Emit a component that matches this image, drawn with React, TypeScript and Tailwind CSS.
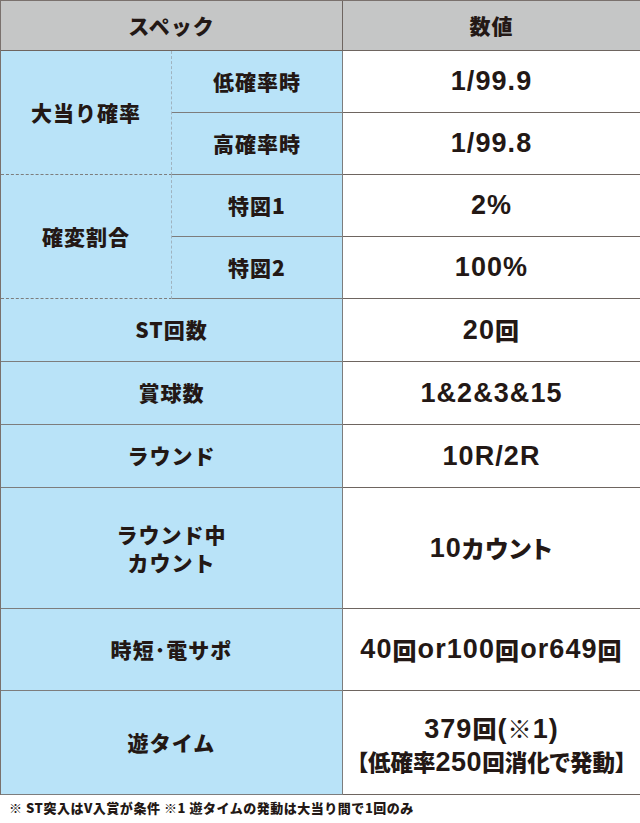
import React from "react";

const jp = { fontFamily: '"Noto Sans CJK JP", "Noto Sans", sans-serif' };
const num = { fontFamily: '"Liberation Sans", "Noto Sans CJK JP", sans-serif' };

const L =
  "bg-[#b9e3f8] border-r border-b border-[#7d7d7d] flex items-center justify-center text-[21px] font-black tracking-[0.05em]";
const V =
  "bg-white border-r border-b border-[#6e6560] flex items-center justify-center text-[27px] font-bold tracking-[0.04em] whitespace-nowrap [font-feature-settings:'palt']";

function J({ children, small }: { children: React.ReactNode; small?: boolean }) {
  return (
    <span className={small ? "text-[22.5px] font-black tracking-normal" : "text-[24px] font-black"} style={jp}>
      {children}
    </span>
  );
}

export default function App() {
  return (
    <div className="w-[640px] h-[823px] bg-white text-[#231815]" style={jp}>
      <div className="grid grid-cols-[171px_171px_298px] grid-rows-[50px_62px_62px_62px_62px_63px_63px_63px_121px_82px_104px] border-t border-l border-[#7a716d]">
        {/* header */}
        <div className="col-span-2 bg-[#c5c6c6] border-r border-b border-[#6e6560] flex items-center justify-center text-[21px] font-black tracking-[0.05em]">
          スペック
        </div>
        <div className="bg-[#c5c6c6] border-r border-b border-[#6e6560] flex items-center justify-center text-[21px] font-black tracking-[0.05em]">
          数値
        </div>

        {/* 大当り確率 */}
        <div className="row-span-2 bg-[#b9e3f8] border-r border-dashed border-r-[#9fb3c0] border-b border-b-[#7d7d7d] flex items-center justify-center text-[21px] font-black tracking-[0.05em]">
          大当り確率
        </div>
        <div className={L}>低確率時</div>
        <div className={V} style={num}>1/99.9</div>
        <div className={L}>高確率時</div>
        <div className={V} style={num}>1/99.8</div>

        {/* 確変割合 */}
        <div className="row-span-2 bg-[#b9e3f8] border-r border-dashed border-r-[#9fb3c0] border-b border-b-[#7d7d7d] flex items-center justify-center text-[21px] font-black tracking-[0.05em]">
          確変割合
        </div>
        <div className={L}>特図1</div>
        <div className={V} style={num}>2%</div>
        <div className={L}>特図2</div>
        <div className={V} style={num}>100%</div>

        <div className={`col-span-2 ${L}`}>ST回数</div>
        <div className={V} style={num}>
          20<J>回</J>
        </div>

        <div className={`col-span-2 ${L}`}>賞球数</div>
        <div className={V} style={num}>1&amp;2&amp;3&amp;15</div>

        <div className={`col-span-2 ${L}`}>ラウンド</div>
        <div className={V} style={num}>10R/2R</div>

        <div className={`col-span-2 ${L} flex-col leading-[28px]`}>
          <span>ラウンド中</span>
          <span>カウント</span>
        </div>
        <div className={V} style={num}>
          10<J>カウント</J>
        </div>

        <div className={`col-span-2 ${L}`}>時短･電サポ</div>
        <div className={V} style={num}>
          40<J>回</J>or100<J>回</J>or649<J>回</J>
        </div>

        <div className={`col-span-2 ${L}`}>遊タイム</div>
        <div className={`${V} flex-col leading-[32px] pt-[4px]`} style={num}>
          <span>
            379<J>回</J>(<J>※</J>1)
          </span>
          <span className="tracking-[0.02em]">
            <J small>【低確率</J>250<J small>回消化で発動】</J>
          </span>
        </div>
      </div>
      <div className="pl-[9px] pt-[3px] text-[13px] font-black tracking-[0.04em]">
        ※&nbsp;ST突入はV入賞が条件&nbsp;※1&nbsp;遊タイムの発動は大当り間で1回のみ
      </div>
    </div>
  );
}
